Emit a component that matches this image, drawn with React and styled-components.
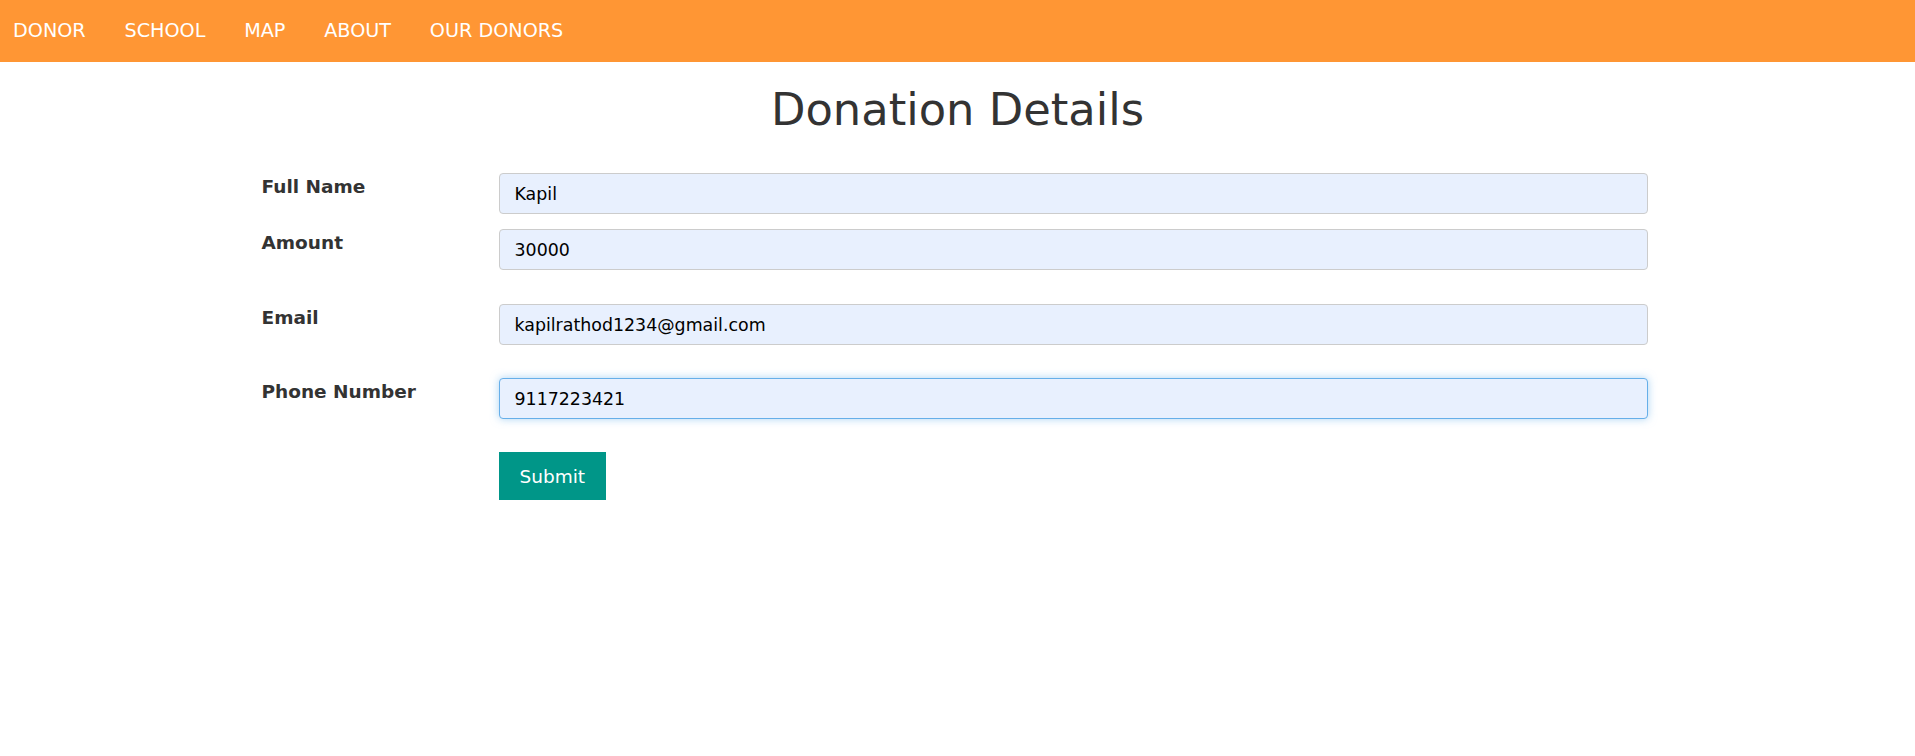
import React, { useEffect, useRef, useState } from 'react';
import styled, { createGlobalStyle } from 'styled-components';

const GlobalStyle = createGlobalStyle`
    body {
        margin: 0;
        background: #fff;
        font-family: "DejaVu Sans", Verdana, sans-serif;
    }
`;

// Top navigation bar
const NavBar = styled.nav`
    display: flex;
    align-items: center;
    height: 62px;
    padding-left: 13px;
    background-color: #ff9634;
`;

const NavList = styled.ul`
    display: flex;
    gap: 38.8px;
    margin: 0;
    padding: 0;
    list-style: none;
`;

const NavLink = styled.a`
    color: #fff;
    font-size: 19.2px;
    line-height: 1.164;
    text-decoration: none;
    cursor: pointer;
`;

const Title = styled.h1`
    margin: 21px 0 0;
    text-align: center;
    font-size: 44.8px;
    font-weight: normal;
    line-height: 53px;
    color: #333;
`;

const Form = styled.form`
    display: grid;
    grid-template-columns: 237px 1149px;
    width: 1386px;
    margin: 37px 0 0 calc(50% - 696px);
`;

const Row = styled.div`
    display: contents;
`;

const Label = styled.label`
    padding-top: 3px;
    margin-bottom: ${(p) => p.$space}px;
    font-size: 18.5px;
    line-height: 1.2;
    font-weight: bold;
    color: #333;
`;

const Input = styled.input`
    box-sizing: border-box;
    width: 100%;
    height: 41px;
    margin: 0 0 ${(p) => p.$space}px;
    padding: 0 15px;
    font-family: "DejaVu Sans", Verdana, sans-serif;
    font-size: 17.4px;
    color: #000;
    background-color: #e8f0fe;
    border: 1px solid ${(p) => (p.$active ? '#66afe9' : '#ccc')};
    border-radius: 4px;
    box-shadow: ${(p) => (p.$active ? '0 0 8px rgba(102, 175, 233, 0.55)' : 'none')};
    outline: none;
    caret-color: #000;
`;

const SubmitButton = styled.button`
    grid-column: 2;
    justify-self: start;
    height: 48px;
    padding: 0 21px;
    font-family: "DejaVu Sans", Verdana, sans-serif;
    font-size: 18.5px;
    color: #fff;
    background-color: #009688;
    border: none;
    cursor: pointer;
`;

const App = () => {
    const [form, setForm] = useState({
        fullName: 'Kapil',
        amount: '30000',
        email: 'kapilrathod1234@gmail.com',
        phone: '9117223421',
    });
    const phoneRef = useRef(null);

    useEffect(() => {
        const el = phoneRef.current;
        if (el) {
            el.focus();
            el.setSelectionRange(el.value.length, el.value.length);
        }
    }, []);

    const handleChange = (e) => {
        setForm({ ...form, [e.target.name]: e.target.value });
    };

    const fields = [
        { name: 'fullName', label: 'Full Name', type: 'text', space: 15 },
        { name: 'amount', label: 'Amount', type: 'text', space: 34 },
        { name: 'email', label: 'Email', type: 'email', space: 33 },
        { name: 'phone', label: 'Phone Number', type: 'tel', space: 33 },
    ];

    return (
        <>
            <GlobalStyle />
            <NavBar>
                <NavList>
                    {['DONOR', 'SCHOOL', 'MAP', 'ABOUT', 'OUR DONORS'].map((item) => (
                        <li key={item}><NavLink>{item}</NavLink></li>
                    ))}
                </NavList>
            </NavBar>
            <Title>Donation Details</Title>
            <Form onSubmit={(e) => e.preventDefault()}>
                {fields.map((f) => (
                    <Row key={f.name}>
                        <Label htmlFor={f.name} $space={f.space}>{f.label}</Label>
                        <Input
                            id={f.name}
                            name={f.name}
                            type={f.type}
                            value={form[f.name]}
                            onChange={handleChange}
                            $space={f.space}
                            $active={f.name === 'phone'}
                            ref={f.name === 'phone' ? phoneRef : undefined}
                        />
                    </Row>
                ))}
                <SubmitButton type="submit">Submit</SubmitButton>
            </Form>
        </>
    );
};

export default App;
